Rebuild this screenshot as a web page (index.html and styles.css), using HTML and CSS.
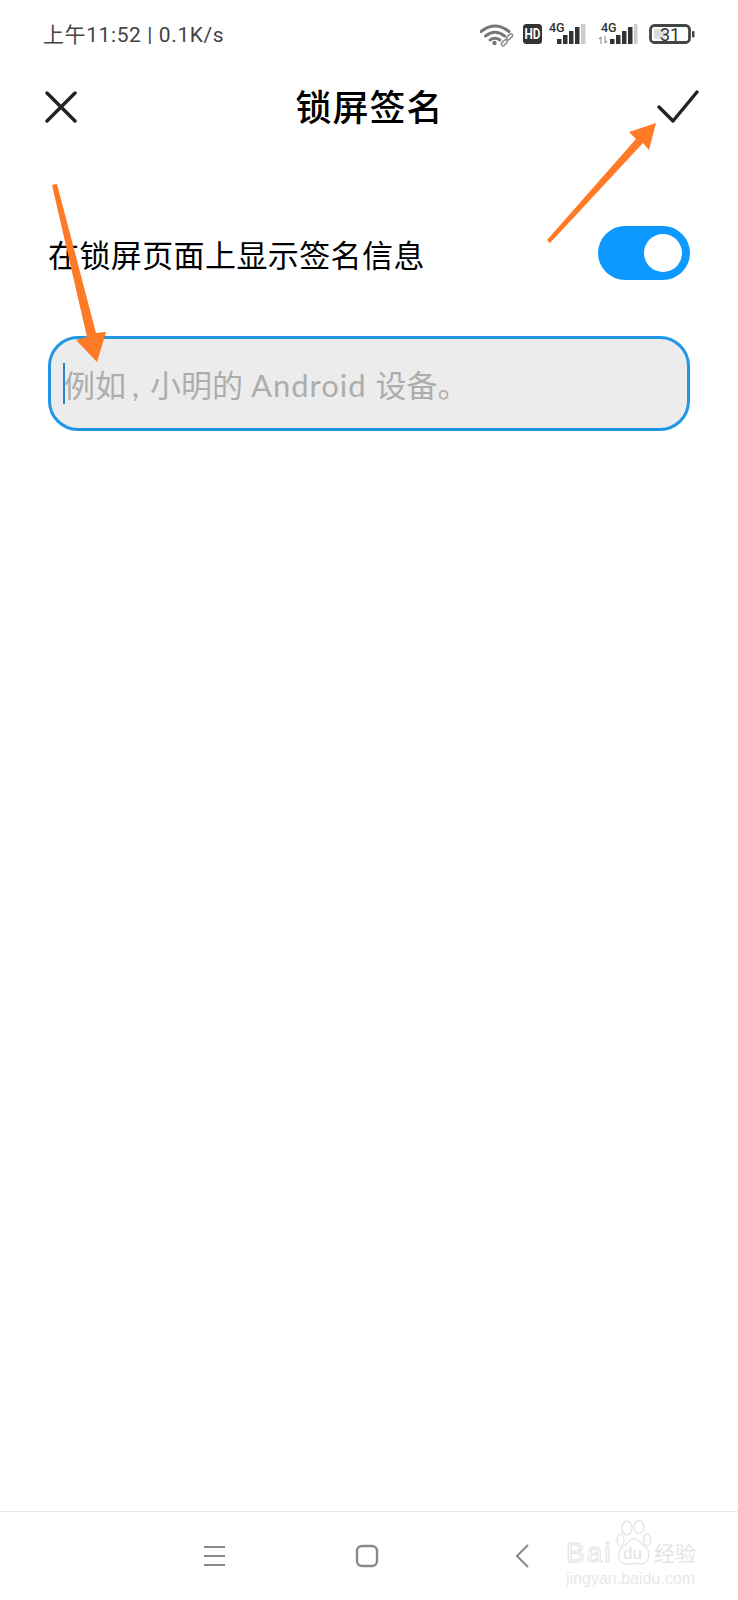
FILE: index.html
```html
<!DOCTYPE html>
<html lang="zh">
<head>
    <meta charset="UTF-8">
    <meta name="viewport" content="width=device-width, initial-scale=1.0">
    <title>锁屏签名</title>
    <link rel="stylesheet" href="styles.css">
</head>
<body>
    <div class="screen">
        <div class="status">
            <div class="statusText">上午11:52 | 0.1K/s</div>
            <svg class="statusIcons" width="216" height="30" viewBox="480 19 216 30">
                <g fill="none" stroke="#777" stroke-width="3" stroke-linecap="round">
                    <path d="M481 31.500q14-11 28 0"/>
                    <path d="M485.500 36q9.500-7.500 19 0"/>
                    <path d="M490 40q5-3.500 10 0"/>
                </g>
                <circle cx="494.500" cy="43" r="2.200" fill="#777"/>
                <g fill="none" stroke="#888" stroke-width="1.500">
                    <rect x="506" y="35.500" width="7" height="3.500" rx="1.700" transform="rotate(-45 509 37)"/>
                    <rect x="501" y="41" width="7" height="3.500" rx="1.700" transform="rotate(-45 504.500 43)"/>
                </g>
                <rect x="523" y="24" width="19" height="20" rx="3.500" fill="#333"/>
                <text x="532.500" y="39" class="hd" textLength="16" lengthAdjust="spacingAndGlyphs">HD</text>
                <text x="549" y="32" class="net">4G</text>
                <g fill="#333">
                    <rect x="557" y="39" width="4.500" height="5"/>
                    <rect x="563" y="35" width="4.500" height="9"/>
                    <rect x="569" y="31" width="4.500" height="13"/>
                    <rect x="575" y="27" width="4.500" height="17"/>
                </g>
                <rect x="581" y="24" width="4.500" height="20" fill="#ccc"/>
                <text x="601" y="32" class="net">4G</text>
                <path d="M601 44v-7m-2 2l2-2M605 36v7m2-2l-2 2" fill="none" stroke="#999" stroke-width="1.200"/>
                <g fill="#333">
                    <rect x="610" y="39" width="4.500" height="5"/>
                    <rect x="616" y="35" width="4.500" height="9"/>
                    <rect x="622" y="31" width="4.500" height="13"/>
                    <rect x="628" y="27" width="4.500" height="17"/>
                </g>
                <rect x="634" y="24" width="3.500" height="20" fill="#ccc"/>
                <rect x="650.500" y="25.500" width="39" height="17" rx="4" fill="none" stroke="#444" stroke-width="2.800"/>
                <rect x="654" y="29" width="11" height="10" fill="#ddd"/>
                <rect x="692" y="31" width="2.500" height="6.500" rx="1" fill="#444"/>
                <text x="670" y="40.500" class="batt">31</text>
            </svg>
        </div>

        <div class="header">
            <svg class="headerIcon" width="32" height="32" viewBox="0 0 32 32">
                <path d="M2 2L30 30M30 2L2 30" fill="none" stroke="#222" stroke-width="3.400" stroke-linecap="round"/>
            </svg>
            <div class="title">锁屏签名</div>
            <svg class="headerIcon headerCheck" width="42" height="33" viewBox="0 0 42 33">
                <path d="M2 17L16 31L40 2" fill="none" stroke="#222" stroke-width="3.400" stroke-linecap="round" stroke-linejoin="round"/>
            </svg>
        </div>

        <div class="row">
            <div class="rowLabel">在锁屏页面上显示签名信息</div>
            <div class="toggle"><div class="knob"></div></div>
        </div>

        <div class="field">
            <span class="caret"></span>
            <span class="hint">例如<span class="comma">,</span>小明的 <span class="latin">Android</span> 设备。</span>
        </div>

        <div class="spacer"></div>

        <div class="nav">
            <svg width="22" height="22" viewBox="0 0 22 22">
                <path d="M0 2H21M0 11H21M0 20H21" fill="none" stroke="#888" stroke-width="2"/>
            </svg>
            <svg width="24" height="24" viewBox="0 0 24 24">
                <rect x="2" y="2" width="20" height="20" rx="5" fill="none" stroke="#888" stroke-width="2.400"/>
            </svg>
            <svg class="navBack" width="14" height="26" viewBox="0 0 14 26">
                <path d="M13 2L2 13L13 24" fill="none" stroke="#888" stroke-width="2"/>
            </svg>
        </div>

        <!-- 截图上后加的箭头和水印 -->
        <svg class="arrows" width="738" height="1600" viewBox="0 0 738 1600">
            <path d="M52 185L57 184L96 333L106 332L97 362L76 340L87 337Z" fill="#ff7a26"/>
            <path d="M547 240L550 243L643 143L649 150L656 123L629 132L636 139Z" fill="#ff7a26"/>
        </svg>
        <div class="mark">
            <div class="markRow">
                <div class="markBai">Bai</div>
                <div class="paw">
                    <svg width="36" height="46" viewBox="0 0 36 46">
                        <g fill="#fff" stroke="#e6e6e6" stroke-width="1.500">
                            <ellipse cx="11" cy="8" rx="5" ry="7"/>
                            <ellipse cx="23" cy="7" rx="5" ry="6.500"/>
                            <ellipse cx="4.500" cy="20" rx="3.500" ry="6"/>
                            <ellipse cx="31" cy="20" rx="3.500" ry="6"/>
                            <path d="M18 19c-5 0-7 5-11 8-6 4-6 17 4 17 5 0 9-1 14 0 9 0 10-13 4-17-4-3-6-8-11-8z"/>
                        </g>
                    </svg>
                    <span class="markDu">du</span>
                </div>
                <div class="markCn">经验</div>
            </div>
            <div class="markSub">jingyan.baidu.com</div>
        </div>
    </div>
</body>
</html>
```

FILE: styles.css
```css
* {
    box-sizing: border-box;
}
body {
    margin: 0;
    background-color: #fff;
    font-family: "Noto Sans CJK SC", sans-serif;
}
.screen {
    position: relative;
    display: flex;
    flex-direction: column;
    height: 1600px;
    overflow: hidden;
}
.status {
    display: flex;
    justify-content: space-between;
    align-items: center;
    height: 46px;
    margin-top: 11px;
    padding: 0 42px 0 43px;
}
.statusText {
    padding-bottom: 2px;
    font-family: Roboto, "Noto Sans CJK SC", sans-serif;
    font-size: 21px;
    letter-spacing: 0.6px;
    color: #444;
}
.statusIcons text {
    font-family: Roboto, sans-serif;
}
.statusIcons .hd {
    font-size: 15px;
    font-weight: 700;
    fill: #fff;
    text-anchor: middle;
}
.statusIcons .net {
    font-size: 12.5px;
    font-weight: 500;
    fill: #333;
}
.statusIcons .batt {
    font-size: 18px;
    fill: #333;
    text-anchor: middle;
}
.header {
    display: flex;
    justify-content: space-between;
    align-items: center;
    height: 60px;
    margin-top: 20px;
    padding: 0 39px 0 45px;
}
.headerIcon {
    display: block;
}
.headerCheck {
    margin-bottom: 2px;
}
.title {
    margin-left: 5px;
    padding-bottom: 4px;
    font-size: 36px;
    font-weight: 500;
    letter-spacing: 1px;
    color: #000;
}
.row {
    display: flex;
    justify-content: space-between;
    align-items: center;
    margin-top: 89px;
    padding: 0 48px;
}
.rowLabel {
    font-size: 31px;
    letter-spacing: 0.4px;
    color: #000;
}
.toggle {
    display: flex;
    justify-content: flex-end;
    align-items: center;
    width: 92px;
    height: 54px;
    padding-right: 8px;
    border-radius: 27px;
    background-color: #0d99ff;
}
.knob {
    width: 38px;
    height: 38px;
    border-radius: 50%;
    background-color: #fff;
}
.field {
    display: flex;
    align-items: center;
    height: 95px;
    margin: 56px 48px 0;
    padding-left: 12px;
    border: 3px solid #2196e3;
    border-radius: 30px;
    background-color: #ececec;
}
.caret {
    width: 2px;
    height: 41px;
    margin-right: -1px;
    background-color: #2a86c8;
}
.hint {
    font-family: Lato, "Noto Sans CJK SC", sans-serif;
    font-size: 31px;
    color: #adadad;
    white-space: pre;
}
.comma {
    margin: 0 11px 0 6px;
}
.latin {
    margin-right: 1px;
    letter-spacing: 1px;
}
.spacer {
    flex: 1;
}
.nav {
    display: flex;
    align-items: center;
    gap: 129px;
    height: 89px;
    padding-left: 204px;
    border-top: 1px solid #e8e8e8;
}
.nav svg {
    display: block;
}
.navBack {
    margin-left: 7px;
}
.arrows {
    position: absolute;
    top: 0;
    left: 0;
}
.mark {
    position: absolute;
    top: 1520px;
    left: 566px;
    width: 134px;
    font-family: "Liberation Sans", "Noto Sans CJK SC", sans-serif;
}
.markRow {
    display: flex;
    align-items: flex-end;
}
.markBai {
    width: 50px;
    font-size: 28px;
    line-height: 27px;
    letter-spacing: 2px;
    color: transparent;
    -webkit-text-stroke: 1px #e2e2e2;
}
.paw {
    position: relative;
    width: 36px;
    height: 46px;
}
.paw svg {
    display: block;
}
.markDu {
    position: absolute;
    left: 7px;
    bottom: 3px;
    font-size: 17px;
    line-height: 18px;
    color: #e2e2e2;
}
.markCn {
    margin: 0 0 2px 2px;
    font-family: "Noto Sans CJK SC", sans-serif;
    font-size: 21px;
    line-height: 23px;
    white-space: nowrap;
    color: #e4e4e4;
}
.markSub {
    margin-top: 4px;
    font-size: 16px;
    line-height: 18px;
    white-space: nowrap;
    color: #e8e8e8;
}
```
